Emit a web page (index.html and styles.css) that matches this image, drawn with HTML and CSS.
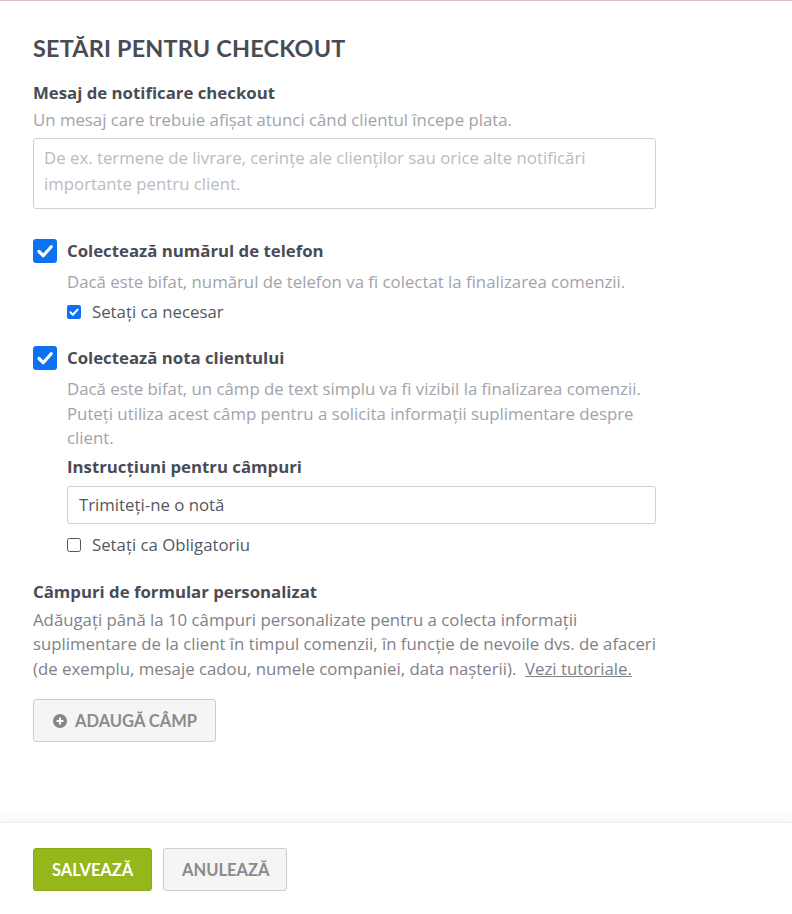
FILE: index.html
```html
<!DOCTYPE html>
<html lang="ro">

    <head>
        <meta charset="UTF-8">
        <meta name="viewport" content="width=device-width, initial-scale=1.0">
        <title>Setări pentru checkout</title>
        <link rel="stylesheet" href="styles.css">
    </head>

    <body>
        <main class="content">
            <h1>Setări pentru checkout</h1>

            <section class="field">
                <div class="field-title">Mesaj de notificare checkout</div>
                <p class="hint">Un mesaj care trebuie afișat atunci când clientul începe plata.</p>
                <textarea class="textarea" placeholder="De ex. termene de livrare, cerințe ale clienților sau orice alte notificări importante pentru client."></textarea>
            </section>

            <section class="option">
                <div class="option-head">
                    <svg class="check-big" viewBox="0 0 24 24"><rect width="24" height="24" rx="3" fill="#0d72f2"/><path d="M6 12.5l4.2 4.2L18.2 7.8" fill="none" stroke="#fff" stroke-width="3.2" stroke-linecap="round" stroke-linejoin="round"/></svg>
                    <span class="option-title">Colectează numărul de telefon</span>
                </div>
                <div class="option-body">
                    <p class="hint">Dacă este bifat, numărul de telefon va fi colectat la finalizarea comenzii.</p>
                    <div class="small-row">
                        <svg class="check-small" viewBox="0 0 14 14"><rect width="14" height="14" rx="2" fill="#0d72f2"/><path d="M3.5 7.3l2.4 2.4L10.6 4.6" fill="none" stroke="#fff" stroke-width="2" stroke-linecap="round" stroke-linejoin="round"/></svg>
                        <span>Setați ca necesar</span>
                    </div>
                </div>
            </section>

            <section class="option second">
                <div class="option-head">
                    <svg class="check-big" viewBox="0 0 24 24"><rect width="24" height="24" rx="3" fill="#0d72f2"/><path d="M6 12.5l4.2 4.2L18.2 7.8" fill="none" stroke="#fff" stroke-width="3.2" stroke-linecap="round" stroke-linejoin="round"/></svg>
                    <span class="option-title">Colectează nota clientului</span>
                </div>
                <div class="option-body">
                    <p class="hint">Dacă este bifat, un câmp de text simplu va fi vizibil la finalizarea comenzii. Puteți utiliza acest câmp pentru a solicita informații suplimentare despre client.</p>
                    <div class="field-title sub">Instrucțiuni pentru câmpuri</div>
                    <input class="input" type="text" value="Trimiteți-ne o notă">
                    <div class="small-row under-input">
                        <svg class="check-small" viewBox="0 0 14 14"><rect x="0.5" y="0.5" width="13" height="13" rx="2" fill="#fff" stroke="#555"/></svg>
                        <span>Setați ca Obligatoriu</span>
                    </div>
                </div>
            </section>

            <section class="field custom">
                <div class="field-title">Câmpuri de formular personalizat</div>
                <p class="hint dark">Adăugați până la 10 câmpuri personalizate pentru a colecta informații suplimentare de la client în timpul comenzii, în funcție de nevoile dvs. de afaceri (de exemplu, mesaje cadou, numele companiei, data nașterii).&nbsp; <a href="#">Vezi tutoriale.</a></p>
                <button type="button" class="btn btn-light add">
                    <svg class="plus" viewBox="0 0 14 14"><circle cx="7" cy="7" r="7" fill="#888"/><path d="M7 3.6v6.8M3.6 7h6.8" stroke="#fff" stroke-width="2"/></svg>
                    <span>Adaugă câmp</span>
                </button>
            </section>
        </main>

        <footer class="footer">
            <button type="button" class="btn btn-green">Salvează</button>
            <button type="button" class="btn btn-light">Anulează</button>
        </footer>
    </body>

</html>
```

FILE: styles.css
```css
html, body {
    height: 100%;
}

body {
    margin: 0;
    border-top: 1px solid #d8c1c8;
    box-sizing: border-box;
    display: flex;
    flex-direction: column;
    font-family: "Open Sans", sans-serif;
    font-size: 16.8px;
    color: #4a4c55;
    background: #fff;
}

.content {
    flex: 1;
    width: 623px;
    padding: 33px 33px 0;
}

h1 {
    margin: 0 0 18px;
    font-family: Lato, sans-serif;
    font-size: 23.4px;
    font-weight: 700;
    line-height: 29px;
    text-transform: uppercase;
    letter-spacing: 0.2px;
    color: #4a4c55;
}

.field-title,
.option-title {
    font-weight: 700;
    line-height: 24px;
    color: #4a4c55;
}

.hint {
    margin: 3px 0 0;
    line-height: 24.5px;
    color: #a2a3a8;
}

.hint.dark {
    color: #808188;
}

.hint a {
    color: #808188;
}

.textarea {
    display: block;
    box-sizing: border-box;
    width: 100%;
    height: 71px;
    margin-top: 5px;
    padding: 6px 10px;
    border: 1px solid #cfd0d4;
    border-radius: 3px;
    font-family: inherit;
    font-size: 16.8px;
    line-height: 26px;
    resize: none;
}

.textarea::placeholder {
    color: #b9bbbf;
}

.option {
    margin-top: 30px;
}

.option.second {
    margin-top: 22px;
}

.option-head {
    display: flex;
    align-items: center;
    gap: 10px;
}

.check-big {
    width: 24px;
    height: 24px;
}

.option-body {
    padding-left: 34px;
}

.option-body > .hint {
    margin-top: 7px;
}

.small-row {
    display: flex;
    align-items: center;
    gap: 11px;
    margin-top: 6px;
    line-height: 24px;
    color: #55565e;
}

.check-small {
    width: 14px;
    height: 14px;
}

.field-title.sub {
    margin-top: 4px;
}

.input {
    display: block;
    box-sizing: border-box;
    width: 100%;
    height: 38px;
    margin-top: 7px;
    padding: 0 11px;
    border: 1px solid #cfd0d4;
    border-radius: 3px;
    font-family: inherit;
    font-size: 16.8px;
    color: #55565e;
}

.small-row.under-input {
    margin-top: 9px;
}

.custom {
    margin-top: 23px;
}

.custom .hint {
    margin-top: 4px;
}

.btn {
    box-sizing: border-box;
    height: 43px;
    padding: 0 18px;
    border-radius: 3px;
    font-family: Lato, sans-serif;
    font-size: 16.5px;
    font-weight: 700;
    text-transform: uppercase;
    white-space: nowrap;
}

.btn-light {
    background: #f5f5f5;
    border: 1px solid #cdcdcd;
    color: #8b8b8b;
}

.btn.add {
    display: flex;
    align-items: center;
    gap: 8px;
    width: 183px;
    margin-top: 18px;
    padding: 0 19px;
}

.plus {
    flex: none;
    width: 14px;
    height: 14px;
}

.footer {
    display: flex;
    gap: 11px;
    padding: 25px 33px 23px;
    box-shadow: 0 -6px 10px rgba(0, 0, 0, 0.035);
    border-top: 1px solid #f0f0f0;
}

.btn-green {
    width: 119px;
    background: #95b71b;
    border: 1px solid #8aab16;
    color: #fff;
}

.footer .btn-light {
    width: 124px;
}
```
